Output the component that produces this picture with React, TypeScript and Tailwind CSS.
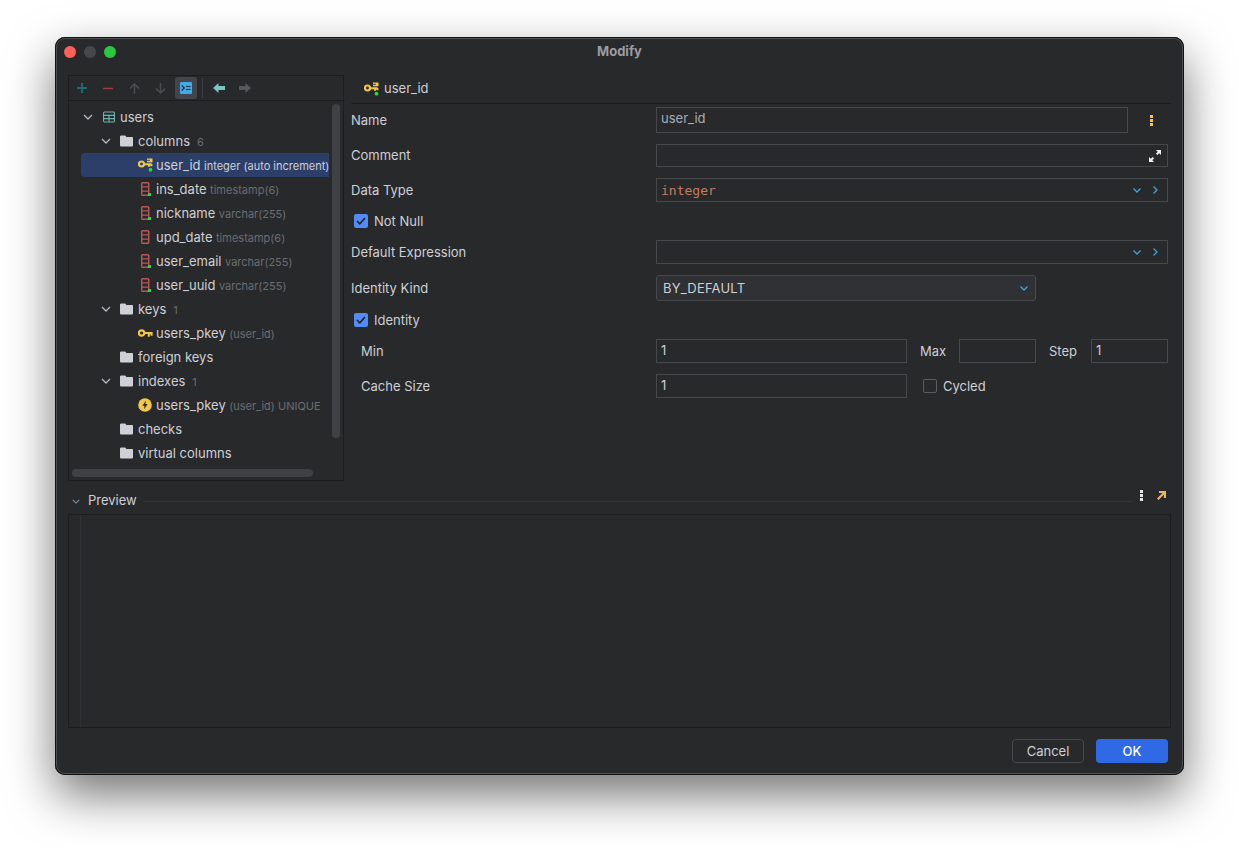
import type { ReactNode } from "react";

function Chevron({ className = "text-[#b4b8bf]" }: { className?: string }) {
    return (
        <svg width="10" height="6" viewBox="0 0 10 6" fill="none" stroke="currentColor" strokeWidth="1.3" className={className}>
            <path d="M1 1l4 4 4-4" />
        </svg>
    );
}

function Folder() {
    return (
        <svg width="14" height="12" viewBox="0 0 14 12">
            <path d="M0 1.5C0 .7.6 0 1.4 0h3.4c.4 0 .7.2 1 .4L7 1.600h5.600c.8 0 1.400.6 1.400 1.400v7.600c0 .8-.6 1.400-1.400 1.400H1.400C.6 12 0 11.400 0 10.600z" fill="#ced0d6" />
        </svg>
    );
}

function TableIcon() {
    return (
        <svg width="13" height="12" viewBox="0 0 13 12" fill="none" stroke="#6fb5ac" strokeWidth="1.2" className="ml-px">
            <rect x=".6" y=".6" width="11.800" height="10.800" rx="1" />
            <path d="M.6 4.200h11.800M.6 7.800h11.800M6.500 4.200v7.200" />
        </svg>
    );
}

function ColumnIcon({ dot = true }: { dot?: boolean }) {
    return (
        <svg width="13" height="15" viewBox="0 0 13 15" fill="none">
            <rect x="3.700" y=".7" width="7" height="12.600" rx=".8" stroke="#b5595b" strokeWidth="1.400" />
            <path d="M3.700 4.900h7M3.700 9.100h7" stroke="#b5595b" strokeWidth="1.400" />
            {dot && <rect x="10" y="11" width="3" height="3" rx=".6" fill="#22e03c" />}
        </svg>
    );
}

function PrimaryKeyColumn() {
    return (
        <svg width="15" height="14" viewBox="0 0 15 14" fill="none" className="shrink-0">
            <circle cx="3.500" cy="6" r="2.500" stroke="#f2c84b" strokeWidth="2.100" />
            <path d="M6 6.200h7.600M11 6v2.800M13.400 6v2.200" stroke="#f2c84b" strokeWidth="2" />
            <rect x="9" y=".5" width="5.500" height="3.800" fill="#f2c84b" />
            <path d="M9 2.300h3" stroke="#27282b" strokeWidth=".8" />
            <rect x="10.800" y="10" width="3.400" height="3.400" rx="1.200" fill="#22e03c" />
        </svg>
    );
}

function KeyIcon() {
    return (
        <svg width="15" height="9" viewBox="0 0 15 9" fill="none" className="shrink-0">
            <circle cx="3.600" cy="4" r="2.700" stroke="#f2c84b" strokeWidth="2.200" />
            <path d="M6 4h8.600M10.800 4v3.800M13.600 4v2.800" stroke="#f2c84b" strokeWidth="2.100" />
        </svg>
    );
}

function IndexIcon() {
    return (
        <svg width="14" height="14" viewBox="0 0 14 14" className="shrink-0">
            <circle cx="7" cy="7" r="6.800" fill="#f2c84b" />
            <path d="M7.900 2.400 4.400 7.800h2.200l-.7 3.800 3.700-5.600H7.300z" fill="#28292b" />
        </svg>
    );
}

type TreeRowProps = {
    indent: string;
    open?: boolean;
    icon: ReactNode;
    name: string;
    hint?: string;
    count?: string;
    selected?: boolean;
};

function TreeRow({ indent, open, icon, name, hint, count, selected }: TreeRowProps) {
    return (
        <div className={`flex h-6 items-center overflow-hidden whitespace-nowrap rounded-l-[4px] ${indent} ${selected ? "bg-[#2c3f69]" : ""}`}>
            <div className="flex w-[21px] shrink-0 pl-[2px]">{open && <Chevron />}</div>
            <div className="flex h-4 w-[13px] shrink-0 items-center">{icon}</div>
            <span className="ml-[5px] pt-[2px] text-[13px] text-[#ced0d6]">{name}</span>
            {hint && <span className={`ml-[3.500px] pt-[2px] text-[11px] ${selected ? "text-[#ced0d6]" : "text-[#6a6d73]"}`}>{hint}</span>}
            {count && <span className="ml-[7px] pt-[2px] text-[11px] text-[#6a6d73]">{count}</span>}
        </div>
    );
}

function ToolButton({ children }: { children: ReactNode }) {
    return <div className="flex w-[26px] justify-center">{children}</div>;
}

function Toolbar() {
    return (
        <div className="flex h-[25px] items-center border-b border-[#1d1e20]">
            <ToolButton>
                <svg width="10" height="10" viewBox="0 0 10 10" stroke="#17808e" strokeWidth="1.400"><path d="M5 0v10M0 5h10" /></svg>
            </ToolButton>
            <ToolButton>
                <svg width="10" height="3" viewBox="0 0 10 3" stroke="#a63a3d" strokeWidth="1.500"><path d="M0 1.500h10" /></svg>
            </ToolButton>
            <ToolButton>
                <svg width="11" height="11" viewBox="0 0 11 11" fill="none" stroke="#4b4d51" strokeWidth="1.500"><path d="M5.500 11V1M1 5.500l4.500-4.500L10 5.500" /></svg>
            </ToolButton>
            <ToolButton>
                <svg width="11" height="11" viewBox="0 0 11 11" fill="none" stroke="#4b4d51" strokeWidth="1.500"><path d="M5.500 0v10M1 5.500 5.500 10 10 5.500" /></svg>
            </ToolButton>
            <ToolButton>
                <div className="flex h-[22px] w-[22px] items-center justify-center rounded-[3px] bg-[#43454a]">
                    <svg width="12" height="12" viewBox="0 0 12 12">
                        <rect width="12" height="12" rx="1" fill="#3fa9ea" />
                        <path d="M1.800 3.500 4.300 6 1.800 8.500" fill="none" stroke="#1f2a33" strokeWidth="1.100" />
                        <path d="M6 4.500h4.500M6 7.500h4.500" stroke="#1f2a33" strokeWidth="1.100" />
                    </svg>
                </div>
            </ToolButton>
            <div className="flex w-[7px] justify-center">
                <div className="h-[20px] w-px bg-[#3c3e42]" />
            </div>
            <ToolButton>
                <svg width="12" height="10" viewBox="0 0 12 10" fill="#7cc4bf"><path d="M0 5l5.500-5v3H12v4H5.500v3z" /></svg>
            </ToolButton>
            <ToolButton>
                <svg width="12" height="10" viewBox="0 0 12 10" fill="#55585c"><path d="M12 5 6.500 0v3H0v4h6.500v3z" /></svg>
            </ToolButton>
        </div>
    );
}

function Tree() {
    return (
        <div className="relative flex-1 overflow-hidden">
            <div className="ml-[12px] mt-[4px] w-[248px]">
                <TreeRow indent="pl-0" open icon={<TableIcon />} name="users" />
                <TreeRow indent="pl-[18px]" open icon={<Folder />} name="columns" count="6" />
                <TreeRow indent="pl-[36px]" selected icon={<PrimaryKeyColumn />} name="user_id" hint="integer (auto increment)" />
                <TreeRow indent="pl-[36px]" icon={<ColumnIcon />} name="ins_date" hint="timestamp(6)" />
                <TreeRow indent="pl-[36px]" icon={<ColumnIcon />} name="nickname" hint="varchar(255)" />
                <TreeRow indent="pl-[36px]" icon={<ColumnIcon dot={false} />} name="upd_date" hint="timestamp(6)" />
                <TreeRow indent="pl-[36px]" icon={<ColumnIcon />} name="user_email" hint="varchar(255)" />
                <TreeRow indent="pl-[36px]" icon={<ColumnIcon />} name="user_uuid" hint="varchar(255)" />
                <TreeRow indent="pl-[18px]" open icon={<Folder />} name="keys" count="1" />
                <TreeRow indent="pl-[36px]" icon={<KeyIcon />} name="users_pkey" hint="(user_id)" />
                <TreeRow indent="pl-[18px]" icon={<Folder />} name="foreign keys" />
                <TreeRow indent="pl-[18px]" open icon={<Folder />} name="indexes" count="1" />
                <TreeRow indent="pl-[36px]" icon={<IndexIcon />} name="users_pkey" hint="(user_id) UNIQUE" />
                <TreeRow indent="pl-[18px]" icon={<Folder />} name="checks" />
                <TreeRow indent="pl-[18px]" icon={<Folder />} name="virtual columns" />
            </div>
            <div className="absolute left-[263px] top-[3px] h-[334px] w-2 rounded-full bg-[#3f4145]" />
            <div className="absolute left-[3px] top-[368px] h-2 w-[241px] rounded-full bg-[#3f4145]" />
        </div>
    );
}

function Label({ children, className = "pt-[2px]" }: { children: ReactNode; className?: string }) {
    return <div className={`w-[305px] text-[13px] text-[#ced0d6] ${className}`}>{children}</div>;
}

function SideLabel({ children, className }: { children: ReactNode; className: string }) {
    return <div className={`ml-[13px] pt-[2px] text-[13px] text-[#ced0d6] ${className}`}>{children}</div>;
}

function Field({ className, children }: { className: string; children?: ReactNode }) {
    return <div className={`flex items-center border border-[#46484c] px-[4px] text-[13px] text-[#ced0d6] ${className}`}>{children}</div>;
}

function CheckRow({ label }: { label: string }) {
    return (
        <div className="flex h-6 items-center pl-[3px]">
            <div className="flex h-[14px] w-[14px] items-center justify-center rounded-[2px] bg-[#548af7]">
                <svg width="10" height="8" viewBox="0 0 10 8" fill="none" stroke="#1e1f22" strokeWidth="1.500"><path d="M1 4l2.800 2.800L9 1" /></svg>
            </div>
            <span className="ml-[6px] pt-[2px] text-[13px] text-[#ced0d6]">{label}</span>
        </div>
    );
}

function ComboIcons() {
    return (
        <div className="ml-auto flex items-center gap-[12px] pr-[5px]">
            <svg width="8" height="5" viewBox="0 0 8 5" fill="none" stroke="#3aa5e0" strokeWidth="1.300"><path d="M.5.5 4 4 7.500.5" /></svg>
            <svg width="5" height="8" viewBox="0 0 5 8" fill="none" stroke="#3aa5e0" strokeWidth="1.300"><path d="M.5.500 4 4 .5 7.500" /></svg>
        </div>
    );
}

function Form() {
    return (
        <div className="w-[820px]">
            <div className="flex h-[29px] items-center border-b border-[#1d1e20] pb-px pl-[13px]">
                <PrimaryKeyColumn />
                <span className="ml-[5px] text-[13px] text-[#ced0d6]">user_id</span>
            </div>
            <div className="mt-[3px] flex h-[26px] items-center">
                <Label>Name</Label>
                <Field className="h-[26px] w-[472px] pb-[3px]">
                    <span className="text-[#a9acb2]">user_id</span>
                </Field>
                <svg width="3" height="11" viewBox="0 0 3 11" fill="#f2c84b" className="ml-[22px]">
                    <rect width="3" height="3" />
                    <rect y="4" width="3" height="3" />
                    <rect y="8" width="3" height="3" />
                </svg>
            </div>
            <div className="mt-[11px] flex h-[23px] items-center">
                <Label className="pt-0">Comment</Label>
                <Field className="h-[23px] w-[512px]">
                    <svg width="12" height="12" viewBox="0 0 13 13" fill="#f0f0f0" className="ml-auto mr-[2px]">
                        <path d="M7.500 0H13v5.500L11 3.500 9 5.500 7.500 4 9.500 2zM5.500 13H0V7.500l2 2L4 7.500 5.500 9l-2 2z" />
                    </svg>
                </Field>
            </div>
            <div className="mt-[11px] flex h-6 items-center">
                <Label>Data Type</Label>
                <Field className="h-6 w-[512px]">
                    <span className="pt-[2px] font-['DejaVu_Sans_Mono',monospace] text-[13px] text-[#c77d5f]">integer</span>
                    <ComboIcons />
                </Field>
            </div>
            <div className="mt-[7px]">
                <CheckRow label="Not Null" />
            </div>
            <div className="mt-[7px] flex h-6 items-center">
                <Label>Default Expression</Label>
                <Field className="h-6 w-[512px]">
                    <ComboIcons />
                </Field>
            </div>
            <div className="mt-[11px] flex h-[26px] items-center">
                <Label>Identity Kind</Label>
                <Field className="h-[26px] w-[380px] justify-between rounded-[3px] bg-[#2f3135] pl-[6px] pr-[7px]">
                    <span className="pt-[2px] tracking-[0.2px]">BY_DEFAULT</span>
                    <svg width="8" height="5" viewBox="0 0 8 5" fill="none" stroke="#3aa5e0" strokeWidth="1.300"><path d="M.5.5 4 4 7.500.5" /></svg>
                </Field>
            </div>
            <div className="mt-[7px]">
                <CheckRow label="Identity" />
            </div>
            <div className="mt-[7px] flex h-6 items-center">
                <Label className="pl-[10px] pt-[2px]">Min</Label>
                <Field className="h-6 w-[251px]">1</Field>
                <SideLabel className="w-[39px]">Max</SideLabel>
                <Field className="h-6 w-[77px]" />
                <SideLabel className="w-[42px]">Step</SideLabel>
                <Field className="h-6 w-[77px]">1</Field>
            </div>
            <div className="mt-[11px] flex h-6 items-center">
                <Label className="pl-[10px] pt-[2px]">Cache Size</Label>
                <Field className="h-6 w-[251px]">1</Field>
                <div className="ml-[16px] h-[14px] w-[14px] rounded-[2px] border border-[#5a5d63]" />
                <span className="ml-[6px] pt-[2px] text-[13px] text-[#ced0d6]">Cycled</span>
            </div>
        </div>
    );
}

export default function App() {
    return (
        <div className="h-[848px] w-full bg-white pl-[55px] pt-[37px] font-['Inter',sans-serif]">
            <div className="h-[738px] w-[1129px] rounded-[10px] bg-[#28292b] shadow-[inset_0_0_0_1px_#111,inset_0_0_0_2px_#4c4e51,0_20px_48px_rgba(0,0,0,0.55)]">
                <div className="relative flex h-[38px] items-center justify-center pb-[8px]">
                    <div className="absolute left-[9px] top-[9px] flex gap-2">
                        <div className="h-3 w-3 rounded-full bg-[#ff5f57]" />
                        <div className="h-3 w-3 rounded-full bg-[#45474a]" />
                        <div className="h-3 w-3 rounded-full bg-[#28c840]" />
                    </div>
                    <span className="text-[13px] font-bold text-[#9b9c9f]">Modify</span>
                </div>

                <div className="flex h-[406px] gap-[7px] pl-[13px]">
                    <div className="flex w-[276px] flex-col border border-[#1d1e20]">
                        <Toolbar />
                        <Tree />
                    </div>
                    <Form />
                </div>

                <div className="flex h-[33px] items-center pl-[13px] pr-[12px] pt-[7px]">
                    <div className="ml-[4px] w-[15px]">
                        <Chevron className="h-[5px] w-[8px] text-[#8596a8]" />
                    </div>
                    <span className="ml-[1px] w-[55px] text-[13px] text-[#ced0d6]">Preview</span>
                    <div className="h-px w-[989px] bg-[#323437]" />
                    <div className="mb-[12px] ml-[8px] flex items-center gap-[14px]">
                        <svg width="3" height="11" viewBox="0 0 3 11" fill="#e6e6e6">
                            <rect width="3" height="3" />
                            <rect y="4" width="3" height="3" />
                            <rect y="8" width="3" height="3" />
                        </svg>
                        <svg width="9" height="9" viewBox="0 0 9 9" fill="none" stroke="#f2b662" strokeWidth="2.200"><path d="M.8 8.200 7.500 1.500M2 1h6v6" /></svg>
                    </div>
                </div>

                <div className="ml-[13px] h-[214px] w-[1103px] border border-[#1d1e20] pl-[11px]">
                    <div className="h-full w-px bg-[#2f3134]" />
                </div>

                <div className="flex justify-end gap-3 pr-4 pt-[11px]">
                    <div className="flex h-6 w-[72px] items-center justify-center rounded-[4px] border border-[#46484c] pt-px text-[13px] text-[#ced0d6]">Cancel</div>
                    <div className="flex h-6 w-[72px] items-center justify-center rounded-[4px] bg-[#3069e6] pt-px text-[13px] font-medium text-white">OK</div>
                </div>
            </div>
        </div>
    );
}
